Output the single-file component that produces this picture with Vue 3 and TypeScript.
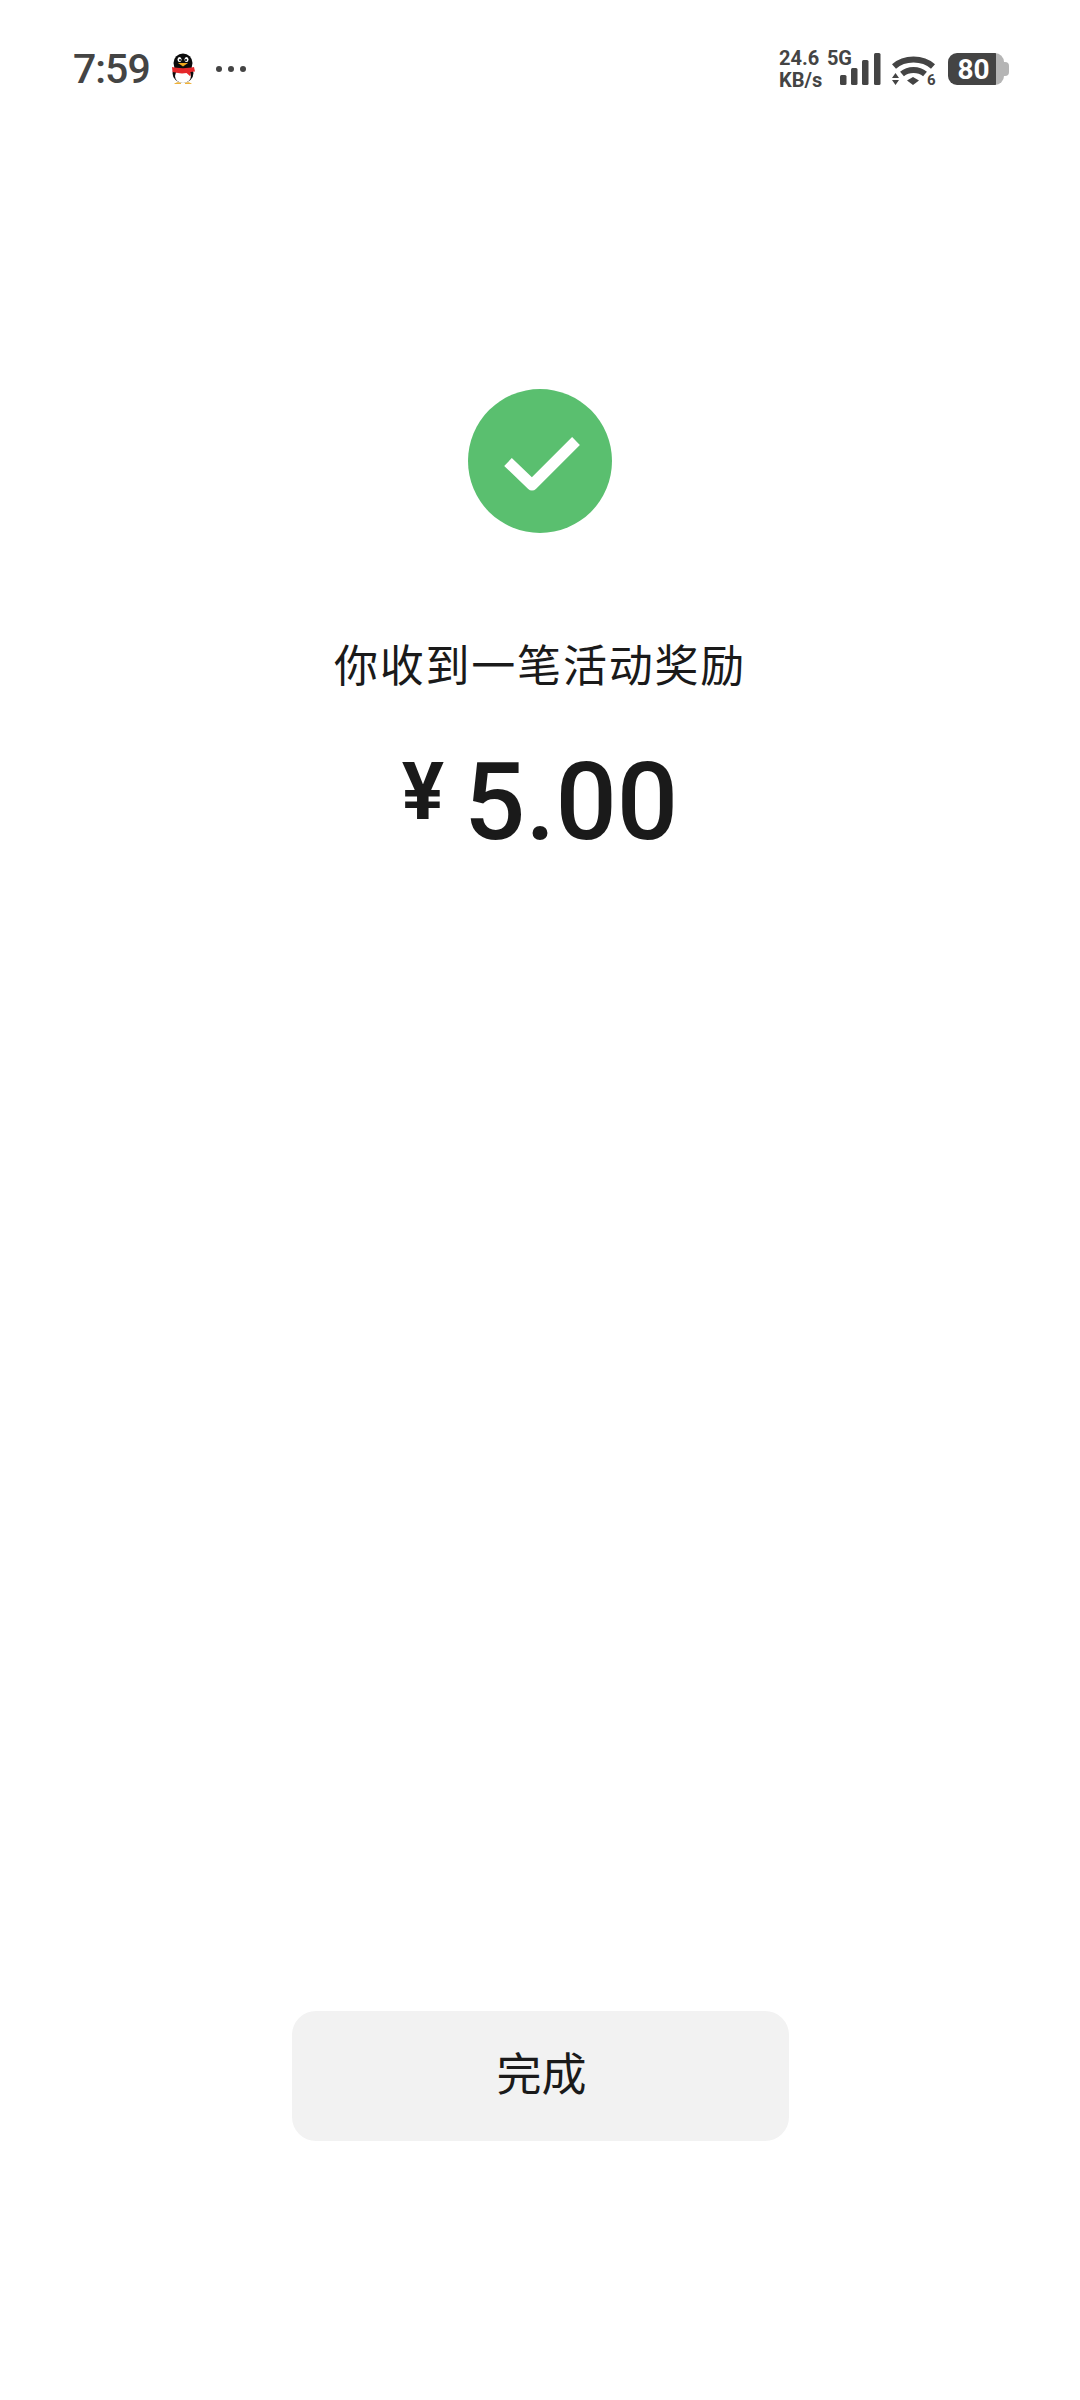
<script setup lang="ts">
const title = '你收到一笔活动奖励'
const amount = '5.00'
const bars = [
  { x: 0, y: 22, h: 10 },
  { x: 11, y: 15, h: 17 },
  { x: 22, y: 7, h: 25 },
  { x: 34, y: 0, h: 32 }
]
</script>

<template>
  <div class="page">
    <div class="status-bar">
      <div class="status-left">
        <span class="time">7:59</span>
        <svg class="qq" width="34" height="34" viewBox="0 0 34 34">
          <rect width="34" height="34" rx="8" fill="#fff" />
          <ellipse cx="17" cy="11" rx="9.500" ry="9.500" fill="#0b0b0b" />
          <ellipse cx="17" cy="21" rx="10.500" ry="10" fill="#0b0b0b" />
          <ellipse cx="17" cy="24" rx="8" ry="7" fill="#fff" />
          <ellipse cx="13.500" cy="7.500" rx="2" ry="2.500" fill="#fff" />
          <ellipse cx="20.500" cy="7.500" rx="2" ry="2.500" fill="#fff" />
          <circle cx="14" cy="8" r="1" fill="#000" />
          <circle cx="20" cy="8" r="1" fill="#000" />
          <path d="M12 11h10l-5 3.500z" fill="#f2a81d" />
          <path d="M6 15c6 1.500 16 1.500 22 0l1 4.500-4.500.5v4.500l-4-3.500c-3 .5-6 .5-8.500 0L6.500 20z" fill="#e5282b" />
          <path d="M8 32c2-2 5-2.500 7-1v1zM26 32c-2-2-5-2.500-7-1v1z" fill="#eeb23a" />
        </svg>
        <div class="dots">
          <i></i>
          <i></i>
          <i></i>
        </div>
      </div>
      <div class="status-right">
        <div class="speed">
          <div class="speed-top"><span>24.6</span><span>5G</span></div>
          <div>KB/s</div>
        </div>
        <svg class="signal" width="41" height="32" viewBox="0 0 41 32">
          <rect v-for="b in bars" :key="b.x" :x="b.x" :y="b.y" width="6.500" :height="b.h" rx="1.500" fill="#444" />
        </svg>
        <svg class="wifi" width="44" height="36" viewBox="0 0 44 36">
          <path d="M2 13.500C7 9 14 6.500 21.500 6.500S36 9 41 13.500" fill="none" stroke="#444" stroke-width="6" />
          <path d="M10 21c3-2.500 7-4 11.500-4s8.500 1.500 11.500 4" fill="none" stroke="#444" stroke-width="6" />
          <path d="M15 27.500 21 24l6 3.500-6 4.500z" fill="#444" />
          <path d="M3.500 20 0 25h7zM3.500 32 0 27h7z" fill="#444" />
          <text class="wifi-num" x="35" y="32">6</text>
        </svg>
        <div class="battery">
          <div class="battery-body"><span>80</span></div>
          <div class="battery-nub"></div>
        </div>
      </div>
    </div>

    <div class="content">
      <div class="check">
        <svg width="144" height="144" viewBox="0 0 144 144">
          <path d="M40 73 64 96 108 52" fill="none" stroke="#fff" stroke-width="11" stroke-linejoin="round" />
        </svg>
      </div>
      <div class="title">{{ title }}</div>
      <div class="amount">
        <span class="currency">¥</span>
        <span class="value">{{ amount }}</span>
      </div>
    </div>

    <button class="done">完成</button>
  </div>
</template>

<style>
html,
body {
  margin: 0;
  background: #fff;
}
</style>

<style scoped>
.page {
  display: flex;
  flex-direction: column;
  align-items: center;
  width: 1080px;
  height: 2400px;
  background-color: #fff;
  font-family: "Noto Sans CJK SC", "Noto Sans", sans-serif;
  color: #1a1a1a;
}

.status-bar {
  display: flex;
  justify-content: space-between;
  align-items: center;
  box-sizing: border-box;
  width: 100%;
  height: 38px;
  margin-top: 50px;
  padding: 0 71px 0 73px;
  color: #444;
}

.status-left,
.status-right {
  display: flex;
  align-items: center;
}

.time {
  font-family: Roboto, sans-serif;
  font-size: 41px;
  font-weight: 500;
  line-height: 38px;
  letter-spacing: -1px;
}

.qq {
  margin-left: 16px;
}

.dots {
  display: flex;
  gap: 6px;
  margin-left: 16px;
}

.dots i {
  width: 6px;
  height: 6px;
  border-radius: 50%;
  background-color: #444;
}

.speed {
  box-sizing: border-box;
  width: 74px;
  padding-left: 1px;
  font-family: Roboto, sans-serif;
  font-size: 20px;
  font-weight: 700;
  line-height: 22px;
  white-space: nowrap;
}

.speed-top {
  display: flex;
  justify-content: space-between;
}

.signal {
  margin: 0 0 0 -12px;
}

.wifi {
  margin: 0 0 -4px 11px;
}

.wifi-num {
  font-family: Roboto, sans-serif;
  font-size: 15px;
  font-weight: 700;
  fill: #444;
}

.battery {
  display: flex;
  align-items: center;
  margin-left: 12px;
}

.battery-body {
  display: flex;
  align-items: center;
  justify-content: center;
  box-sizing: border-box;
  width: 56px;
  height: 32px;
  padding-right: 5px;
  border-radius: 9px;
  background: linear-gradient(90deg, #444 48px, #b5b5b5 48px);
  color: #fff;
  font-family: Roboto, sans-serif;
  font-size: 28px;
  font-weight: 700;
}

.battery-nub {
  width: 5px;
  height: 14px;
  border-radius: 0 4px 4px 0;
  background-color: #b5b5b5;
}

.content {
  display: flex;
  flex-direction: column;
  align-items: center;
  margin-top: 301px;
}

.check {
  display: flex;
  width: 144px;
  height: 144px;
  border-radius: 50%;
  background-color: #5abf6f;
}

.title {
  margin-top: 97px;
  font-size: 44px;
  line-height: 66px;
  letter-spacing: 1.800px;
}

.amount {
  display: flex;
  align-items: baseline;
  margin-top: 41px;
  font-family: Roboto, sans-serif;
  line-height: 130px;
}

.currency {
  position: relative;
  top: -20px;
  font-size: 79px;
  font-weight: 700;
}

.value {
  margin-left: 20px;
  font-size: 108px;
  font-weight: 500;
  letter-spacing: 0;
}

.done {
  display: block;
  width: 497px;
  height: 130px;
  margin-top: auto;
  margin-bottom: 259px;
  padding: 0 0 9px 3px;
  border: none;
  border-radius: 24px;
  background-color: #f2f2f2;
  color: #1a1a1a;
  font-family: "Noto Sans CJK SC", sans-serif;
  font-size: 45px;
  font-weight: 400;
}
</style>
